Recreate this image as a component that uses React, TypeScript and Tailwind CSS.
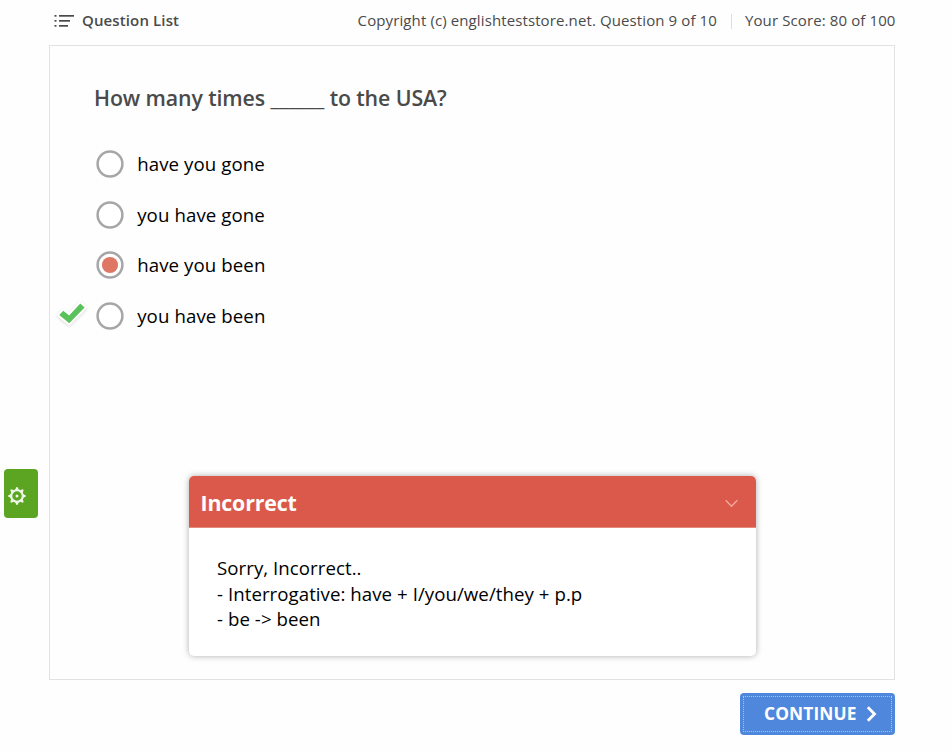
import React from "react";

const answers = [
  { label: "have you gone" },
  { label: "you have gone" },
  { label: "have you been", selected: true },
  { label: "you have been", correct: true },
];

function ListIcon() {
  return (
    <svg width="20" height="14" viewBox="0 0 20 14" fill="#4a4a4a" className="shrink-0">
      <rect x="0.5" y="1" width="2" height="1.7" />
      <rect x="0.5" y="6" width="2" height="1.7" />
      <rect x="0.5" y="11" width="2" height="1.7" />
      <rect x="5" y="1" width="15" height="1.7" />
      <rect x="5" y="6" width="11" height="1.7" />
      <rect x="5" y="11" width="9" height="1.7" />
    </svg>
  );
}

function CheckIcon() {
  return (
    <svg
      width="32"
      height="28"
      viewBox="0 0 32 28"
      className="absolute -left-[40px] -top-[1px] overflow-visible drop-shadow-[0_1px_1.5px_rgba(0,0,0,0.15)]"
    >
      <path d="M3.2 14L7.3 9.8L13.1 14.6L24.3 2.4L28.6 6.6L13.2 22.2Z" fill="#fff" stroke="#fff" strokeWidth="4" strokeLinejoin="round" />
      <path d="M3.2 14L7.3 9.8L13.1 14.6L24.3 2.4L28.6 6.6L13.2 22.2Z" fill="#5bc25b" />
    </svg>
  );
}

function Radio({ selected }: { selected?: boolean }) {
  return (
    <svg width="28" height="28" viewBox="0 0 28 28" className="shrink-0">
      <circle cx="14" cy="14" r="12.4" fill="#fff" stroke="#a6a6a6" strokeWidth="2.5" />
      {selected && <circle cx="14" cy="14" r="8.1" fill="#df7765" />}
    </svg>
  );
}

function GearIcon() {
  return (
    <svg width="18" height="18" viewBox="-9 -9 18 18" className="shrink-0">
      <circle r="5.8" fill="none" stroke="#edf6e4" strokeWidth="2.1" />
      {[0, 45, 90, 135, 180, 225, 270, 315].map((a) => (
        <path key={a} d="M-2 -6L-0.5 -8.9L0.5 -8.9L2 -6Z" fill="#edf6e4" transform={`rotate(${a})`} />
      ))}
      <circle r="1.5" fill="#edf6e4" />
    </svg>
  );
}

export default function App() {
  return (
    <div className="relative flex h-[752px] w-[952px] flex-col overflow-hidden bg-[#fefefe] pl-[49px] pr-[57px] font-['Open_Sans',sans-serif] text-black">
      <header className="flex h-[45px] shrink-0 items-center pb-[4px] pl-[5px] text-[15px] text-[#4a4a4a]">
        <ListIcon />
        <button className="ml-2 whitespace-nowrap text-[15px] font-semibold tracking-[0.12px]">Question List</button>
        <div className="-mr-[0.5px] ml-auto flex items-center whitespace-nowrap tracking-[0.11px]">
          <span>Copyright (c) englishteststore.net. Question 9 of 10</span>
          <span className="ml-[14px] mr-[13px] mt-[2px] h-[15px] w-px bg-[#dedede]" />
          <span>Your Score: 80 of 100</span>
        </div>
      </header>

      <main className="flex h-[635px] w-[846px] shrink-0 flex-col border border-[#e2e2e2] bg-[#fefefe] pl-[44px]">
        <h1 className="mt-[37px] h-[30px] whitespace-nowrap text-[21.33px] font-semibold leading-[30px] tracking-[-0.11px] text-[#4a4a4a]">
          How many times ______ to the USA?
        </h1>
        <div className="mt-[26px] flex h-[202px] flex-col">
          {answers.map((a) => (
            <label key={a.label} className="relative flex h-[50.5px] items-center pl-[1.7px]">
              <span className="relative flex">
                {a.correct && <CheckIcon />}
                <Radio selected={a.selected} />
              </span>
              <span className="ml-[13.5px] whitespace-nowrap text-[18.67px] tracking-[0.09px]">{a.label}</span>
            </label>
          ))}
        </div>

        <section className="ml-[95px] mt-[134.5px] flex h-[180.5px] w-[567px] flex-col overflow-hidden rounded-[5px] bg-white shadow-[0_0_6px_rgba(0,0,0,0.32)]">
          <div className="flex h-[52px] shrink-0 items-center justify-between border-b border-[#e58b7e] bg-[#db594b] pl-[11.5px] pr-[18px] pt-[4px]">
            <h2 className="text-[21.33px] font-bold tracking-[-0.15px] text-white">Incorrect</h2>
            <svg width="13" height="9" viewBox="0 0 13 9" fill="none" stroke="#f2a99f" strokeWidth="1.3">
              <path d="M.7 1.2L6.5 7.2L12.3 1.2" />
            </svg>
          </div>
          <div className="whitespace-nowrap pl-[28px] pt-[27.5px] text-[18.67px] leading-[25.5px] tracking-[0.05px]">
            <p>Sorry, Incorrect..</p>
            <p>- Interrogative: have + I/you/we/they + p.p</p>
            <p>- be -&gt; been</p>
          </div>
        </section>
      </main>

      <footer className="mt-[13px] flex shrink-0 justify-end">
        <button className="flex h-[42px] w-[155px] rounded-[4px] bg-[#4f87dd] p-[3px]">
          <span className="flex h-full w-full items-center border border-dotted border-[#a9c5f1] pl-[20px] text-[17.33px] font-bold text-white">
            <span className="tracking-[0.12px]">CONTINUE</span>
            <svg width="11" height="16" viewBox="0 0 11 16" fill="none" stroke="#fff" strokeWidth="2.8" className="ml-[9px]">
              <path d="M1.8 1.3L8.5 8L1.8 14.7" />
            </svg>
          </span>
        </button>
      </footer>

      <button className="absolute left-[4px] top-[469px] flex h-[49px] w-[34px] items-center rounded-[4px] bg-[#5ba523] pl-[4px] pt-[5px]">
        <GearIcon />
      </button>
    </div>
  );
}
